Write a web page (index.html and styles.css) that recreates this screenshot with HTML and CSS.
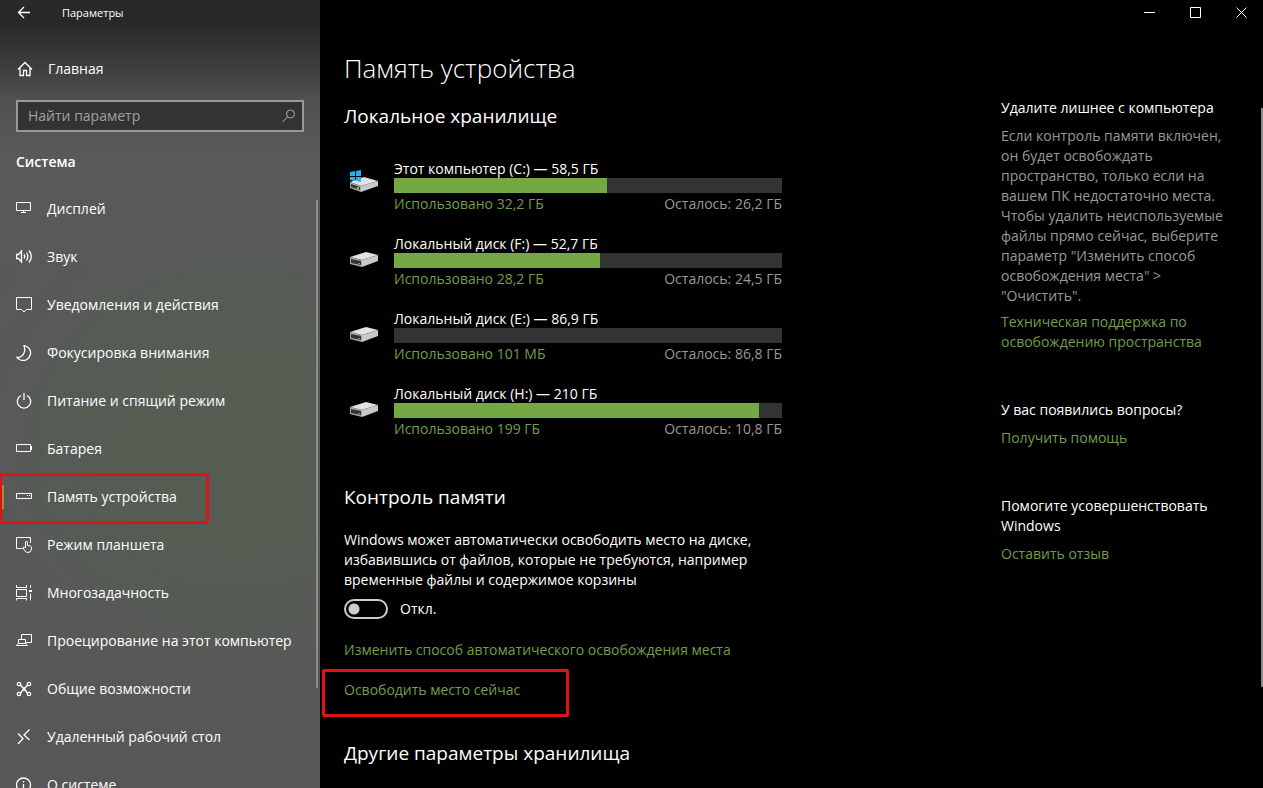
FILE: index.html
```html
<!DOCTYPE html>
<html lang="ru">
    <head>
        <meta charset="utf-8">
        <meta name="viewport" content="width=device-width, initial-scale=1">
        <title>Параметры</title>
        <link rel="stylesheet" href="styles.css">
    </head>
    <body>
        <div class="window">
            <nav class="sidebar">
                <div class="titlebar">
                    <button class="back" aria-label="Назад">
                        <svg class="icon thick" viewBox="0 0 16 16"><path d="M14 7.500H2.500M8 2L2.500 7.500L8 13"/></svg>
                    </button>
                    <span>Параметры</span>
                </div>
                <a class="item home" href="#">
                    <svg class="icon thick" viewBox="0 0 16 16"><path d="M1 8.500L8 1.500L15 8.500M3 7V14.500H6.500V9.500H9.500V14.500H13V7"/></svg>
                    Главная
                </a>
                <div class="search">
                    <input type="text" placeholder="Найти параметр" aria-label="Найти параметр">
                    <svg class="icon" viewBox="0 0 16 16"><circle cx="9.500" cy="6" r="4"/><path d="M6.500 9L1.500 14"/></svg>
                </div>
                <h2 class="section">Система</h2>
                <div class="menu">
                    <a class="item" href="#">
                        <svg class="icon" viewBox="0 0 16 16"><path d="M.5 1.500H14.500V9.500H.5ZM7.500 9.500V11.500M5 11.500H10"/></svg>
                        Дисплей
                    </a>
                    <a class="item" href="#">
                        <svg class="icon thick" viewBox="0 0 16 16"><path d="M.5 5.500H2.500L5.500 2V13L2.500 9.500H.5ZM8 5.500Q9.500 7.500 8 9.500M10.500 3.500Q13 7.500 10.500 11.500M13 1.500Q17.500 7.500 13 13.500"/></svg>
                        Звук
                    </a>
                    <a class="item" href="#">
                        <svg class="icon" viewBox="0 0 16 16"><path d="M.5 .5H15.500V12.500H10.500L8 15L5.500 12.500H.5Z"/></svg>
                        Уведомления и действия
                    </a>
                    <a class="item" href="#">
                        <svg class="icon thick" viewBox="0 0 16 16"><path d="M8 .5C13 2 15 5 14.500 9C13.500 14 9 16.500 4.500 15C2.500 14.300 1.500 13.500 1 12.500C6 12.500 10.500 8 8 .5Z"/></svg>
                        Фокусировка внимания
                    </a>
                    <a class="item" href="#">
                        <svg class="icon thick" viewBox="0 0 16 16"><path d="M5 2.500A6.700 6.700 0 1 0 11 2.500M8 0V7"/></svg>
                        Питание и спящий режим
                    </a>
                    <a class="item" href="#">
                        <svg class="icon" viewBox="0 0 16 16"><path d="M.5 3.500H14.500V10.500H.5ZM15.500 5V9"/></svg>
                        Батарея
                    </a>
                    <a class="item active marked" href="#">
                        <svg class="icon" viewBox="0 0 16 16"><path d="M.5 4.500H15.500V9.500H.5ZM11 6.500H12M13 6.500H14"/></svg>
                        Память устройства
                    </a>
                    <a class="item" href="#">
                        <svg class="icon" viewBox="0 0 16 16"><path d="M6.500 11.500H.5V.5H14.500V6M9.500 11V5Q10.500 3 11.500 5V8.500L14.500 9Q15.500 9.500 15.500 10.500V12Q15 15.500 12 15.500Q9.500 15.500 8.500 13.500L7 10.500Q8 9 9.500 11"/></svg>
                        Режим планшета
                    </a>
                    <a class="item" href="#">
                        <svg class="icon" viewBox="0 0 16 16"><path d="M.5 0V2.500H10.500V0M.5 4.500H10.500V11.500H.5ZM.5 15.500V13.500H10.500V15.500M14.500 0V3M14.500 8.500V15.500M13 5.500H16M13 6.500H16"/></svg>
                        Многозадачность
                    </a>
                    <a class="item" href="#">
                        <svg class="icon" viewBox="0 0 16 16"><path d="M5.500 6V1.500H15.500V9.500H10M2.500 6.500H9.500V10.500H2.500ZM2 10.500L.5 12.500H11.500L10 10.500"/></svg>
                        Проецирование на этот компьютер
                    </a>
                    <a class="item" href="#">
                        <svg class="icon thick" viewBox="0 0 16 16"><circle cx="3" cy="3" r="1.700"/><circle cx="13" cy="3" r="1.700"/><circle cx="3" cy="13" r="1.700"/><circle cx="13" cy="13" r="1.700"/><path d="M4.500 4L7 7H9L11.500 4M4.500 12L7 9H9L11.500 12M7 7V9M9 7V9"/></svg>
                        Общие возможности
                    </a>
                    <a class="item" href="#">
                        <svg class="icon thick" viewBox="0 0 16 16"><path d="M2 4.500L7 9.500L2 15M13.500 .5L8 6L13.500 11"/></svg>
                        Удаленный рабочий стол
                    </a>
                    <a class="item" href="#">
                        <svg class="icon thick" viewBox="0 0 16 16"><circle cx="7.500" cy="8" r="7"/><path d="M7.500 7V12M7.500 4V5.500"/></svg>
                        О системе
                    </a>
                </div>
            </nav>

            <main class="main">
                <div class="controls">
                    <button aria-label="Свернуть"><svg viewBox="0 0 11 11"><path d="M0 5.500H11"/></svg></button>
                    <button aria-label="Развернуть"><svg viewBox="0 0 11 11"><path d="M.5 .5H10.500V10.500H.5Z"/></svg></button>
                    <button aria-label="Закрыть"><svg viewBox="0 0 11 11"><path d="M.5 .5L10.500 10.500M10.500 .5L.5 10.500"/></svg></button>
                </div>
                <div class="columns">
                    <div class="content">
                        <h1>Память устройства</h1>
                        <h2>Локальное хранилище</h2>

                        <div class="drives">
                            <div class="drive">
                                <svg class="disk" viewBox="0 0 28 24">
                                    <path fill="#e2e2e4" d="M0 13L14 8L28 12L11 17Z"/>
                                    <path fill="#a9a9ac" d="M0 13L11 17V23L0 19Z"/>
                                    <path fill="#c8c8cb" d="M11 17L28 12V17L11 23Z"/>
                                    <path fill="#333" d="M1 15L10 18V21L1 18Z"/>
                                    <path fill="#7fbf5a" d="M7 18H9V20H7Z"/>
                                    <path fill="#23b4ee" d="M0 3L5 2V7H0ZM6 2L11 1V7H6ZM0 8H5V12L0 11ZM6 8H11V13L6 12Z"/>
                                </svg>
                                <div class="info">
                                    <div class="name">Этот компьютер (C:) — 58,5 ГБ</div>
                                    <div class="bar"><div class="fill" style="width:55%"></div></div>
                                    <div class="usage"><a href="#">Использовано 32,2 ГБ</a><span>Осталось: 26,2 ГБ</span></div>
                                </div>
                            </div>
                            <div class="drive">
                                <svg class="disk" viewBox="0 0 28 24">
                                    <path fill="#e2e2e4" d="M0 13L16 8L28 11L12 16Z"/>
                                    <path fill="#a9a9ac" d="M0 13L12 16V23L0 20Z"/>
                                    <path fill="#c8c8cb" d="M12 16L28 11V17L12 23Z"/>
                                    <path fill="#333" d="M1 15L11 17V21L1 19Z"/>
                                    <path fill="#7d8a7d" d="M8 19H10V20H8Z"/>
                                </svg>
                                <div class="info">
                                    <div class="name">Локальный диск (F:) — 52,7 ГБ</div>
                                    <div class="bar"><div class="fill" style="width:53%"></div></div>
                                    <div class="usage"><a href="#">Использовано 28,2 ГБ</a><span>Осталось: 24,5 ГБ</span></div>
                                </div>
                            </div>
                            <div class="drive">
                                <svg class="disk" viewBox="0 0 28 24">
                                    <path fill="#e2e2e4" d="M0 13L16 8L28 11L12 16Z"/>
                                    <path fill="#a9a9ac" d="M0 13L12 16V23L0 20Z"/>
                                    <path fill="#c8c8cb" d="M12 16L28 11V17L12 23Z"/>
                                    <path fill="#333" d="M1 15L11 17V21L1 19Z"/>
                                    <path fill="#7d8a7d" d="M8 19H10V20H8Z"/>
                                </svg>
                                <div class="info">
                                    <div class="name">Локальный диск (E:) — 86,9 ГБ</div>
                                    <div class="bar"><div class="fill" style="width:0%"></div></div>
                                    <div class="usage"><a href="#">Использовано 101 МБ</a><span>Осталось: 86,8 ГБ</span></div>
                                </div>
                            </div>
                            <div class="drive">
                                <svg class="disk" viewBox="0 0 28 24">
                                    <path fill="#e2e2e4" d="M0 13L16 8L28 11L12 16Z"/>
                                    <path fill="#a9a9ac" d="M0 13L12 16V23L0 20Z"/>
                                    <path fill="#c8c8cb" d="M12 16L28 11V17L12 23Z"/>
                                    <path fill="#333" d="M1 15L11 17V21L1 19Z"/>
                                    <path fill="#7d8a7d" d="M8 19H10V20H8Z"/>
                                </svg>
                                <div class="info">
                                    <div class="name">Локальный диск (H:) — 210 ГБ</div>
                                    <div class="bar"><div class="fill" style="width:94%"></div></div>
                                    <div class="usage"><a href="#">Использовано 199 ГБ</a><span>Осталось: 10,8 ГБ</span></div>
                                </div>
                            </div>
                        </div>

                        <h2>Контроль памяти</h2>
                        <p class="about">Windows может автоматически освободить место на диске, избавившись от файлов, которые не требуются, например временные файлы и содержимое корзины</p>
                        <div class="toggle">
                            <input type="checkbox" id="sense">
                            <label for="sense">Откл.</label>
                        </div>
                        <div class="links">
                            <a href="#">Изменить способ автоматического освобождения места</a>
                            <a class="marked" href="#">Освободить место сейчас</a>
                        </div>
                        <h2>Другие параметры хранилища</h2>
                    </div>

                    <aside class="help">
                        <section>
                            <h3>Удалите лишнее с компьютера</h3>
                            <p>Если контроль памяти включен, он будет освобождать пространство, только если на вашем ПК недостаточно места. Чтобы удалить неиспользуемые файлы прямо сейчас, выберите параметр "Изменить способ освобождения места" &gt; "Очистить".</p>
                            <a href="#">Техническая поддержка по освобождению пространства</a>
                        </section>
                        <section>
                            <h3>У вас появились вопросы?</h3>
                            <a href="#">Получить помощь</a>
                        </section>
                        <section>
                            <h3>Помогите усовершенствовать Windows</h3>
                            <a href="#">Оставить отзыв</a>
                        </section>
                    </aside>
                </div>
            </main>
        </div>
    </body>
</html>
```
FILE: styles.css
```css
*, *::before, *::after {
    box-sizing: border-box;
}

body {
    margin: 0;
    background: #000;
    color: #fff;
    font-family: "Open Sans", "Noto Sans", sans-serif;
    font-size: 14px;
    line-height: 20px;
}

h1, h2, h3, p {
    margin: 0;
    font-weight: 400;
}

a {
    color: #6f9f4a;
    text-decoration: none;
}

button {
    border: none;
    padding: 0;
    background: none;
    color: #fff;
}

svg {
    display: block;
    flex-shrink: 0;
    fill: none;
}

.icon, .controls svg {
    stroke: currentColor;
    stroke-width: 1;
}

.icon {
    width: 16px;
    height: 16px;
}

.thick {
    stroke-width: 1.3;
}

.window {
    display: flex;
    height: 100vh;
    overflow: hidden;
}

/* left menu */
.sidebar {
    position: relative;
    flex: 0 0 320px;
    overflow: hidden;
    background:
        radial-gradient(ellipse 300px 260px at 75% 57%, rgba(84, 94, 82, 0.8) 40%, rgba(84, 94, 82, 0)),
        linear-gradient(#2a2a2a 0, #272727 20px, #3a3a3a 60px, #505050 100px, #595959 150px, #575757 100%);
}

.sidebar::after, .main::after {
    content: "";
    position: absolute;
    background: #8a8a8a;
}

.sidebar::after {
    top: 200px;
    right: 2px;
    width: 2px;
    height: 488px;
}

.titlebar {
    display: flex;
    align-items: center;
    gap: 30px;
    height: 26px;
    padding-left: 16px;
    font-size: 11px;
}

.item {
    display: flex;
    align-items: center;
    gap: 15px;
    position: relative;
    height: 48px;
    padding-left: 16px;
    color: #fff;
    white-space: nowrap;
}

.home {
    margin-top: 19px;
    padding-left: 17px;
}

.search {
    display: flex;
    align-items: center;
    height: 32px;
    margin: 7px 16px 0;
    padding: 0 5px 0 10px;
    border: 2px solid #999;
    background: #333;
    color: #aaa;
}

.search input {
    flex: 1;
    min-width: 0;
    border: none;
    padding: 0;
    background: none;
    color: #fff;
    font: inherit;
}

.search input::placeholder {
    color: #a0a0a0;
    opacity: 1;
}

.section {
    margin: 20px 16px 13px;
    font-size: 14px;
    font-weight: 600;
}

.active::before {
    content: "";
    position: absolute;
    left: 2px;
    top: 12px;
    width: 2px;
    height: 24px;
    background: #a08a3c;
}

/* red frames */
.marked::after {
    content: "";
    position: absolute;
    border: 3px solid #e01212;
    border-radius: 2px;
}

.item.marked::after {
    left: -1px;
    top: 0;
    width: 210px;
    height: 51px;
}

.links .marked::after {
    left: -22px;
    top: -11px;
    width: 247px;
    height: 48px;
}

/* right side */
.main {
    position: relative;
    flex: 1;
    min-width: 0;
}

.main::after {
    top: 108px;
    right: 0;
    width: 2px;
    height: 579px;
}

.controls {
    display: flex;
    justify-content: flex-end;
    height: 25px;
}

.controls button {
    display: flex;
    align-items: center;
    justify-content: center;
    width: 46px;
    padding-left: 3px;
}

.controls svg {
    width: 11px;
    height: 11px;
}

.columns {
    display: flex;
    justify-content: space-between;
    padding: 25px 30px 0 24px;
}

.content {
    width: 438px;
}

.content h1 {
    font-size: 26px;
    font-weight: 350;
    line-height: 36px;
}

.content h2 {
    font-size: 19px;
    line-height: 28px;
}

.content h1 + h2 {
    margin-top: 16px;
}

.drives {
    display: grid;
    gap: 20px;
    margin: 29px 0 44px;
}

.drive {
    display: flex;
    gap: 16px;
    padding-left: 6px;
}

.disk {
    width: 28px;
    height: 24px;
    margin-top: 10px;
}

.info {
    flex: 1;
}

.name {
    line-height: 19px;
}

.bar {
    height: 15px;
    background: #333;
}

.fill {
    height: 100%;
    background: #74a843;
}

.usage {
    display: flex;
    justify-content: space-between;
    padding-top: 1px;
    color: #999;
}

.about {
    margin-top: 19px;
}

.toggle {
    display: flex;
    align-items: center;
    gap: 12px;
    margin: 9px 0 21px;
}

.toggle input {
    appearance: none;
    width: 44px;
    height: 20px;
    margin: 0;
    border: 2px solid #ccc;
    border-radius: 10px;
    background: radial-gradient(circle at 8px 8px, #ccc 5px, transparent 6px);
}

.links {
    display: grid;
    justify-items: start;
    gap: 20px;
    margin-bottom: 39px;
}

.links a {
    position: relative;
}

.help {
    width: 232px;
    padding-top: 48px;
}

.help section {
    margin-bottom: 48px;
}

.help h3 {
    margin-bottom: 8px;
    font-size: 14px;
}

.help p {
    margin-bottom: 6px;
    color: #999;
}

.help a {
    display: block;
}
```
